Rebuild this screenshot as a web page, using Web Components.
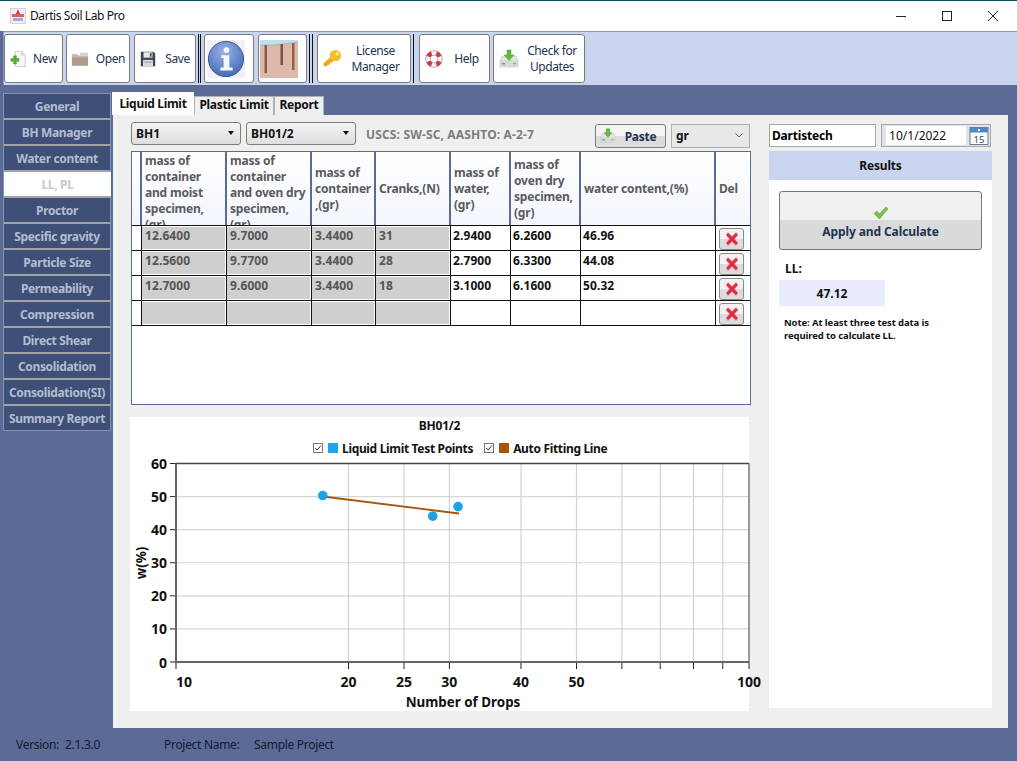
<!DOCTYPE html>
<html>
<head>
<meta charset="utf-8">
<title>Dartis Soil Lab Pro</title>
<style>
html, body { margin: 0; padding: 0; background: #5c6a96; }
body { font-family: "Noto Sans", "Liberation Sans", sans-serif; font-size: 12px; }
</style>
</head>
<body>
<soil-app></soil-app>
<script>
const ICONS = {
    logo: `<svg viewBox="0 0 16 16"><rect x=".5" y=".5" width="15" height="15" fill="#f4eef4" stroke="#d8d0e0"/><path d="M6 6 L8 1.500 L10 6 Z" fill="#d8262c"/><rect x="2" y="6" width="12" height="3" fill="#e05a5f"/><rect x="3" y="10" width="10" height="3" fill="#a8a8e0"/></svg>`,
    new: `<svg viewBox="0 0 20 20"><path d="M6 1.500h7l4 4v13H6z" fill="#f7f7f7" stroke="#c8c8c8"/><path d="M13 1.500v4h4" fill="#e2e2e2" stroke="#c8c8c8"/><path d="M4 6.500h3v3h3v3H7v3H4v-3H1v-3h3z" fill="#5cae3a" stroke="#3f8a26" stroke-width=".5"/></svg>`,
    open: `<svg viewBox="0 0 20 20"><path d="M1 4.500h6l1.500 1.500H15l.5 1.500H1z" fill="#cbbcab"/><path d="M10 3h9v4.500h-9z" fill="#dcd2c6"/><path d="M1 7h18v10.500H1z" fill="#ab9b8a"/><path d="M1 7h18v1.500H1z" fill="#c4b6a6"/></svg>`,
    save: `<svg viewBox="0 0 20 20"><path d="M2 2h14l2 2v14H2z" fill="#3f4652"/><rect x="5" y="2.500" width="10" height="6" fill="#e8eaee"/><rect x="12" y="3.500" width="2" height="4" fill="#48505c"/><rect x="4.500" y="11" width="11" height="7" fill="#d6dae0"/><rect x="6" y="13" width="8" height="1" fill="#8a909a"/></svg>`,
    info: `<svg viewBox="0 0 40 40"><rect width="40" height="40" fill="#f1f1f1"/><defs><radialGradient id="ig" cx="45%" cy="30%" r="75%"><stop offset="0" stop-color="#9cb4e6"/><stop offset="1" stop-color="#3f66b8"/></radialGradient></defs><circle cx="20" cy="20" r="18.500" fill="url(#ig)" stroke="#31518f"/><circle cx="20.500" cy="10.500" r="3" fill="#f4f6fa"/><path d="M15 16h8.500v13H27v3H14v-3h3.500V19H15z" fill="#f4f6fa"/></svg>`,
    map: `<svg viewBox="0 0 38 38" preserveAspectRatio="none"><rect width="38" height="38" fill="#dcb9a8"/><path d="M0 0h38v2L28 3.500 13 5 0 5z" fill="#bfe0ea"/><path d="M0 5L13 5 28 3.500 38 2" fill="none" stroke="#8aa6ae" stroke-width=".6"/><rect x="4.500" y="5" width="2.500" height="28" fill="#8a5a48"/><rect x="20.500" y="4" width="2.500" height="21" fill="#7a5040"/><rect x="32" y="3" width="2.500" height="27" fill="#94604c"/></svg>`,
    key: `<svg viewBox="0 0 20 20"><path d="M9 7.500 L.5 15 L1 18 L3.500 18.500 L5 16.500 L7 16.500 L7.500 14.500 L9.500 14 L12.500 11 Z" fill="#eaaa1c"/><circle cx="13" cy="7" r="6" fill="#f4be2a"/><circle cx="15" cy="5" r="1.600" fill="#fff2c4"/></svg>`,
    help: `<svg viewBox="0 0 20 20"><circle cx="10" cy="10" r="6.800" fill="none" stroke="#f6f6f6" stroke-width="4.800"/><circle cx="10" cy="10" r="9.300" fill="none" stroke="#8a8a8a" stroke-width=".7"/><circle cx="10" cy="10" r="4.300" fill="none" stroke="#8a8a8a" stroke-width=".7"/><g fill="none" stroke="#d63a3e" stroke-width="4.800"><path d="M3.700 7.400a6.800 6.800 0 0 1 3.700-3.700"/><path d="M12.600 3.700a6.800 6.800 0 0 1 3.700 3.700"/><path d="M16.300 12.600a6.800 6.800 0 0 1-3.700 3.700"/><path d="M7.400 16.300a6.800 6.800 0 0 1-3.700-3.700"/></g></svg>`,
    update: `<svg viewBox="0 0 20 20"><path d="M3 7h14l2 4v7H1v-7z" fill="#e4e6e2" stroke="#c0c4be" stroke-width=".6"/><rect x="1" y="11" width="18" height="7" fill="#d6d9d4"/><rect x="3" y="14" width="3" height="1.500" fill="#8a8f88"/><rect x="14" y="14" width="3" height="1.200" fill="#7cc050"/><path d="M8 1h4v5h3l-5 5.500L5 6h3z" fill="#62b83a" stroke="#4a9a28" stroke-width=".5"/></svg>`,
    del: `<svg viewBox="0 0 16 16"><path d="M2 4L4 1.500 8 5.500l4-4L14 4 10.500 8 14 12l-2 2.500-4-4-4 4L2 12 5.500 8z" fill="#dc2c44" stroke="#ee8c9a" stroke-width=".7"/></svg>`,
    calendar: `<svg viewBox="0 0 20 20"><rect x="1" y="1.500" width="18" height="17" fill="#fafafa" stroke="#6c7a8a"/><rect x="1" y="1.500" width="18" height="5" fill="#4f89c8"/><rect x="9" y="3" width="2" height="2" fill="#fff"/><text x="10" y="16.500" font-family="Noto Sans, sans-serif" font-size="9.500" text-anchor="middle" fill="#404854">15</text></svg>`,
    check: `<svg viewBox="0 0 16 14"><path d="M1 7.500L4 5.200 6.500 8 13 1l2 1.800L6.500 13z" fill="#7cc244" stroke="#5ea030" stroke-width=".6"/></svg>`
};

// small svg icon picked by name
class AppIcon extends HTMLElement {
    connectedCallback() {
        const size = this.getAttribute('size') || 20;
        const height = this.getAttribute('height') || size;
        this.attachShadow({ mode: 'open' }).innerHTML = `
        <style>
        :host { display: inline-flex; width: ${size}px; height: ${height}px; flex: none; }
        svg { width: 100%; height: 100%; display: block; }
        </style>
        ${ICONS[this.getAttribute('name')]}`;
    }
}

class TitleBar extends HTMLElement {
    constructor() {
        super();
        this.attachShadow({ mode: 'open' }).innerHTML = `
        <style>
        :host { display: flex; height: 30px; align-items: center; background: #fff; border-top: 1px solid #134a68; padding: 0 1px 0 10px; color: #111; font-size: 12px; }
        .name { margin-left: 4px; letter-spacing: -.42px; flex: 1; padding-bottom: 1px; }
        .win { width: 46px; height: 30px; display: flex; align-items: center; justify-content: center; }
        svg { width: 10px; height: 10px; stroke: #222; fill: none; }
        </style>
        <app-icon name="logo" size="16"></app-icon>
        <span class="name">Dartis Soil Lab Pro</span>
        <div class="win"><svg viewBox="0 0 10 10"><path d="M0 5.500h10"/></svg></div>
        <div class="win"><svg viewBox="0 0 10 10"><rect x=".5" y=".5" width="9" height="9"/></svg></div>
        <div class="win"><svg viewBox="0 0 10 10"><path d="M0 0l10 10M10 0L0 10"/></svg></div>`;
    }
}

class ToolBar extends HTMLElement {
    constructor() {
        super();
        this.attachShadow({ mode: 'open' }).innerHTML = `
        <style>
        :host { display: flex; height: 49px; padding: 2px 0; margin-left: 3px; background: #c9d4ee; border-top: 1px solid #8a98bc; border-left: 1px solid #8a98bc; align-items: stretch; }
        </style>
        <slot></slot>`;
    }
}

class ToolButton extends HTMLElement {
    constructor() {
        super();
        this.attachShadow({ mode: 'open' }).innerHTML = `
        <style>
        :host { display: flex; box-sizing: border-box; align-items: center; justify-content: center; gap: 7px; background: #fff; border: 1px solid #7b7b7b; border-radius: 3px; font-size: 12px; line-height: 16px; color: #243252; text-align: center; letter-spacing: -.42px; }
        </style>
        <slot name="icon"></slot><span><slot></slot></span>`;
    }
}

class ToolSep extends HTMLElement {
    constructor() {
        super();
        this.attachShadow({ mode: 'open' }).innerHTML = `
        <style>
        :host { display: block; flex: none; box-sizing: border-box; height: 49px; border-left: 1px solid #111; }
        :host([double]) { border-right: 1px solid #111; }
        </style>`;
    }
}

class SideNav extends HTMLElement {
    constructor() {
        super();
        this.attachShadow({ mode: 'open' }).innerHTML = `
        <style>
        :host { display: block; box-sizing: border-box; flex: none; width: 108px; height: 338px; margin: 8px 2px 0 3px; border: 1px solid #8492b6; background: #5c6a96; }
        </style>
        <slot></slot>`;
    }
}

class NavItem extends HTMLElement {
    constructor() {
        super();
        this.attachShadow({ mode: 'open' }).innerHTML = `
        <style>
        :host { display: flex; box-sizing: border-box; height: 26px; align-items: center; justify-content: center; background: #3e5078; border-bottom: 2px solid #a3a3a3; color: #b4bdd0; font-weight: 700; font-size: 12px; letter-spacing: -.35px; white-space: nowrap; }
        :host([active]) { background: #fff; color: #c9c9d2; margin-right: -1px; }
        :host(:last-child) { border-bottom: 0; height: 24px; }
        </style>
        <slot></slot>`;
    }
}

class TabStrip extends HTMLElement {
    constructor() {
        super();
        this.attachShadow({ mode: 'open' }).innerHTML = `
        <style>
        :host { display: flex; height: 23px; margin: 7px 0 0 -1px; align-items: flex-end; }
        </style>
        <slot></slot>`;
    }
}

class TabItem extends HTMLElement {
    constructor() {
        super();
        this.attachShadow({ mode: 'open' }).innerHTML = `
        <style>
        :host { display: flex; box-sizing: border-box; height: 19px; padding-bottom: 3px; align-items: center; justify-content: center; background: #efefef; border: 1px solid #aeb2bc; border-bottom: 0; font-weight: 700; font-size: 12px; letter-spacing: -.3px; color: #111; }
        :host([active]) { height: 23px; background: #fff; border: 0; padding-bottom: 1px; }
        </style>
        <slot></slot>`;
    }
}

class ComboBox extends HTMLElement {
    constructor() {
        super();
        this.attachShadow({ mode: 'open' }).innerHTML = `
        <style>
        :host { display: flex; box-sizing: border-box; width: 110px; height: 23px; padding: 0 6px 1px 4px; align-items: center; justify-content: space-between; border: 1px solid #7d7d7d; border-radius: 3px; background: linear-gradient(#f4f4f4, #dedede); font-weight: 700; font-size: 12px; color: #111; }
        i { width: 0; height: 0; border: 3.500px solid transparent; border-top: 4px solid #111; border-bottom: 0; }
        :host([flat]) { border: 1px solid #b0b0b0; border-radius: 0; background: #e8e8e8; width: 79px; height: 24px; margin-top: 2px; }
        :host([flat]) i { display: none; }
        svg { display: none; width: 8px; height: 5px; fill: none; stroke: #666; }
        :host([flat]) svg { display: block; }
        </style>
        <span><slot></slot></span><i></i><svg viewBox="0 0 8 5"><path d="M.5.500L4 4 7.500.500"/></svg>`;
    }
}

class PasteButton extends HTMLElement {
    constructor() {
        super();
        this.attachShadow({ mode: 'open' }).innerHTML = `
        <style>
        :host { display: flex; box-sizing: border-box; width: 71px; height: 24px; margin-top: 2px; padding-right: 5px; align-items: center; justify-content: center; gap: 9px; border: 1px solid #7d7d7d; border-radius: 3px; background: linear-gradient(#f4f4f4 50%, #dcdcdc 50%); font-weight: 700; font-size: 12px; color: #243252; letter-spacing: -.3px; }
        </style>
        <app-icon name="update" size="16"></app-icon><span><slot></slot></span>`;
    }
}

class DeleteButton extends HTMLElement {
    constructor() {
        super();
        this.attachShadow({ mode: 'open' }).innerHTML = `
        <style>
        :host { display: flex; box-sizing: border-box; width: 25px; height: 22px; align-items: center; justify-content: center; border: 1px solid #8a8a8a; border-radius: 3px; background: linear-gradient(#f2f2f2 50%, #dcdcdc 50%); }
        </style>
        <app-icon name="del" size="16"></app-icon>`;
    }
}

// test data grid, rows are filled from the data below
class DataGrid extends HTMLElement {
    constructor() {
        super();
        const heads = [
            'mass of container and moist specimen, (gr)',
            'mass of container and oven dry specimen, (gr)',
            'mass of container ,(gr)',
            'Cranks,(N)',
            'mass of water, (gr)',
            'mass of oven dry specimen, (gr)',
            'water content,(%)',
            'Del'
        ];
        const rows = [
            ['12.6400', '9.7000', '3.4400', '31', '2.9400', '6.2600', '46.96'],
            ['12.5600', '9.7700', '3.4400', '28', '2.7900', '6.3300', '44.08'],
            ['12.7000', '9.6000', '3.4400', '18', '3.1000', '6.1600', '50.32'],
            ['', '', '', '', '', '', '']
        ];
        let cells = '<div class="head"></div>';
        heads.forEach(h => { cells += `<div class="head"><span>${h}</span></div>`; });
        rows.forEach(r => {
            cells += '<div class="cell"></div>';
            r.forEach((v, i) => { cells += `<div class="cell ${i < 4 ? 'locked' : ''}"><b>${v}</b></div>`; });
            cells += '<div class="cell del"><delete-button></delete-button></div>';
        });
        this.attachShadow({ mode: 'open' }).innerHTML = `
        <style>
        :host { display: block; box-sizing: border-box; width: 620px; height: 254px; border: 1px solid #5c6a96; background: #fff; font-weight: 700; font-size: 12px; }
        .grid { display: grid; grid-template-columns: 10px 85px 85px 64px 75px 60px 70px 135px 34px; grid-template-rows: 73px 25px 25px 25px 25px; }
        .head { box-sizing: border-box; overflow: hidden; display: flex; align-items: center; padding: 0 2px 0 3px; line-height: 16px; border-right: 2px solid #5c6a96; color: #5a5a60; background: linear-gradient(#fff, #f3f6fd); letter-spacing: -.2px; }
        .head:nth-child(9) { border-right: 0; }
        .head:nth-child(2), .head:nth-child(3) { align-items: flex-start; padding-top: 1px; }
        .cell { box-sizing: border-box; border-right: 1px solid #111; border-top: 1px solid #111; padding: 0 1px 0 2px; line-height: 20px; color: #111; }
        .cell b { font-weight: 700; letter-spacing: .1px; }
        .grid > .cell:nth-last-child(-n+9) { border-bottom: 1px solid #111; height: 26px; }
        .locked { color: #555; background: #cfcfcf; background-clip: content-box; padding: 1px 1px 1px 0; }
        .locked b { padding-left: 3px; display: block; line-height: 18px; }
        .del { border-right: 0; padding: 2px 0 0 3px; }
        </style>
        <div class="grid">${cells}</div>`;
    }
}

// log x axis chart, the points are the water contents from the grid
class FlowChart extends HTMLElement {
    constructor() {
        super();
        const left = 46, right = 619, top = 46.5, bottom = 245;
        const xAt = n => left + (right - left) * Math.log10(n / 10);
        const yAt = w => bottom - (bottom - top) * w / 60;
        let s = '';
        [10, 20, 30, 40, 50].forEach(w => { s += `<path d="M${left} ${yAt(w)}H${right}" stroke="#d6d6d6" stroke-width="1.200"/>`; });
        [20, 25, 30, 40, 50, 60, 70, 80, 90].forEach(n => { s += `<path d="M${xAt(n)} ${top}V${bottom}" stroke="#d2d2d2" stroke-width="1.200"/>`; });
        [0, 10, 20, 30, 40, 50, 60].forEach(w => {
            s += `<path d="M${left - 6} ${yAt(w)}H${left}" stroke="#222"/>`;
            s += `<text x="${left - 9}" y="${yAt(w) + 5.500}" text-anchor="end" class="t">${w}</text>`;
        });
        [10, 20, 25, 30, 40, 50, 60, 70, 80, 90, 100].forEach(n => {
            s += `<path d="M${xAt(n)} ${bottom}v7" stroke="#222"/>`;
        });
        [10, 20, 25, 30, 40, 50, 100].forEach(n => {
            const x = n === 10 ? xAt(n) + 8 : xAt(n);
            s += `<text x="${x}" y="270" text-anchor="middle" class="t">${n}</text>`;
        });
        s += `<path d="M${left} ${top}H${right}" stroke="#444" stroke-width="1.300"/>`;
        s += `<path d="M${right} ${top}V${bottom}" stroke="#666" stroke-width="1.300"/>`;
        s += `<path d="M${left} ${top}V${bottom}H${right}" fill="none" stroke="#666" stroke-width="2"/>`;
        s += `<path d="M193 79.500L329 96.500" stroke="#a9560a" stroke-width="1.800"/>`;
        [[18, 50.32], [28, 44.08], [31, 46.96]].forEach(p => {
            s += `<circle cx="${xAt(p[0]) + 0.5}" cy="${yAt(p[1])}" r="4.800" fill="#1fa2e6"/>`;
        });
        this.attachShadow({ mode: 'open' }).innerHTML = `
        <style>
        :host { display: block; width: 619px; height: 294px; margin: 12px 0 0 -1px; background: #fff; }
        .title { text-align: center; font-weight: 700; font-size: 12px; color: #111; padding-top: 1px; height: 17px; line-height: 16px; letter-spacing: -.2px; }
        .legend { display: flex; align-items: center; height: 22px; padding: 2px 0 1px 183px; font-weight: 700; font-size: 12px; color: #111; letter-spacing: -.33px; }
        .box { box-sizing: border-box; width: 10px; height: 10px; border: 1px solid #777; margin-right: 5px; flex: none; display: flex; }
        .box svg { width: 100%; height: 100%; }
        .swatch { width: 10px; height: 10px; margin-right: 4px; flex: none; }
        .legend span { margin-right: 11px; white-space: nowrap; }
        svg.plot { display: block; margin-top: -43px; overflow: visible; }
        svg.plot text { font-family: "Noto Sans", "Liberation Sans", sans-serif; font-weight: 700; fill: #111; }
        .t { font-size: 14px; }
        .axis { font-size: 13.400px; }
        </style>
        <div class="title">BH01/2</div>
        <div class="legend">
            <div class="box"><svg viewBox="0 0 10 10"><path d="M1.500 5L4 7.500 8.500 2" fill="none" stroke="#222" stroke-width="1.200"/></svg></div>
            <div class="swatch" style="background:#1fa2e6"></div><span>Liquid Limit Test Points</span>
            <div class="box"><svg viewBox="0 0 10 10"><path d="M1.500 5L4 7.500 8.500 2" fill="none" stroke="#222" stroke-width="1.200"/></svg></div>
            <div class="swatch" style="background:#a9560a"></div><span>Auto Fitting Line</span>
        </div>
        <svg class="plot" width="619" height="294" viewBox="0 0 619 294">
            ${s}
            <text x="333" y="290" text-anchor="middle" class="axis">Number of Drops</text>
            <text transform="translate(16 146) rotate(-90)" text-anchor="middle" class="axis">w(%)</text>
        </svg>`;
    }
}

class ResultsPanel extends HTMLElement {
    constructor() {
        super();
        this.attachShadow({ mode: 'open' }).innerHTML = `
        <style>
        :host { display: block; flex: 1; background: #fff; font-weight: 700; color: #111; font-size: 12px; }
        .head { height: 29px; background: #c9d4ee; display: flex; align-items: center; justify-content: center; letter-spacing: -.2px; }
        .apply { box-sizing: border-box; width: 203px; height: 59px; margin: 11px 0 0 10px; border: 1px solid #777; border-radius: 3px; background: linear-gradient(#f0f0f0 50%, #d9dadb 50%); display: flex; flex-direction: column; align-items: center; padding-top: 14px; color: #243252; font-size: 12px; letter-spacing: -.1px; line-height: 17px; }
        .apply span { margin-top: 3px; }
        .ll { margin: 12px 0 0 16px; line-height: 14px; }
        .value { width: 106px; height: 26px; margin: 4px 0 0 10px; background: #e8ecfa; display: flex; align-items: center; justify-content: center; }
        .note { margin: 10px 0 0 15px; width: 170px; font-size: 9.500px; line-height: 13px; letter-spacing: -.1px; }
        </style>
        <div class="head">Results</div>
        <div class="apply"><app-icon name="check" size="16" height="14"></app-icon><span>Apply and Calculate</span></div>
        <div class="ll">LL:</div>
        <div class="value">47.12</div>
        <div class="note">Note: At least three test data is required to calculate LL.</div>`;
    }
}

class StatusBar extends HTMLElement {
    constructor() {
        super();
        this.attachShadow({ mode: 'open' }).innerHTML = `
        <style>
        :host { display: flex; flex: 1; align-items: center; font-size: 12px; color: #161c30; letter-spacing: -.3px; padding-bottom: 1px; }
        span { white-space: nowrap; }
        </style>
        <span style="width:49px;margin-left:16px">Version:</span>
        <span style="width:99px">2.1.3.0</span>
        <span style="width:90px">Project Name:</span>
        <span>Sample Project</span>`;
    }
}

class SoilApp extends HTMLElement {
    constructor() {
        super();
        const btn = (style, icon, text, size) => `<tool-button style="${style}"><app-icon slot="icon" name="${icon}" size="${size || 18}"></app-icon>${text}</tool-button>`;
        const navs = ['General', 'BH Manager', 'Water content', 'LL, PL', 'Proctor', 'Specific gravity', 'Particle Size', 'Permeability', 'Compression', 'Direct Shear', 'Consolidation', 'Consolidation(SI)', 'Summary Report'];
        this.attachShadow({ mode: 'open' }).innerHTML = `
        <style>
        :host { display: flex; flex-direction: column; width: 1017px; height: 761px; overflow: hidden; background: #5c6a96; }
        .middle { display: flex; height: 643px; }
        .main { width: 895px; }
        .panel { height: 613px; background: #efefef; box-sizing: border-box; padding: 7px 16px 20px 18px; display: flex; gap: 18px; }
        .left { width: 620px; }
        .picks { display: flex; height: 29px; align-items: flex-start; }
        .picks b { color: #7c7c7c; margin: 4px 0 0 10px; width: 229px; letter-spacing: .15px; font-size: 12px; white-space: nowrap; }
        .right { width: 223px; display: flex; flex-direction: column; }
        .dates { display: flex; height: 29px; gap: 5px; align-items: flex-start; padding-top: 2px; box-sizing: border-box; }
        .who, .when { box-sizing: border-box; height: 23px; border: 1px solid #a8a8a8; background: #fff; display: flex; align-items: center; }
        .who { width: 107px; padding: 0 2px 1px; font-weight: 700; letter-spacing: -.2px; }
        .when { width: 110px; padding: 0 1px 0 4px; justify-content: space-between; background: #dfe3ec; color: #111; }
        .when span { background: #fff; flex: 1; margin-right: 3px; line-height: 19px; }
        </style>
        <title-bar></title-bar>
        <tool-bar>
            ${btn('width:59px;gap:5px', 'new', 'New')}
            <div style="width:3px"></div>${btn('width:64px;gap:7px', 'open', 'Open')}
            <div style="width:4px"></div>${btn('width:62px;gap:8px;padding-right:1px', 'save', 'Save')}
            <div style="width:2px"></div><tool-sep double style="width:3px"></tool-sep>
            <div style="width:3px"></div><tool-button style="width:50px"><app-icon slot="icon" name="info" size="38"></app-icon></tool-button>
            <div style="width:4px"></div><tool-button style="width:49px"><app-icon slot="icon" name="map" size="38"></app-icon></tool-button>
            <div style="width:2px"></div><tool-sep double style="width:4px"></tool-sep>
            <div style="width:4px"></div><tool-button style="width:94px;gap:10px;padding-right:6px"><app-icon slot="icon" name="key" size="19"></app-icon>License<br>Manager</tool-button>
            <div style="width:2px"></div><tool-sep style="width:1px"></tool-sep>
            <div style="width:5px"></div>${btn('width:71px;gap:11px;padding-right:5px', 'help', 'Help')}
            <div style="width:3px"></div><tool-button style="width:92px;gap:8px;padding-right:2px"><app-icon slot="icon" name="update" size="20"></app-icon>Check for<br>Updates</tool-button>
        </tool-bar>
        <div class="middle">
            <side-nav>${navs.map(n => `<nav-item ${n === 'LL, PL' ? 'active' : ''}>${n}</nav-item>`).join('')}</side-nav>
            <div class="main">
                <tab-strip>
                    <tab-item active style="width:82px">Liquid Limit</tab-item>
                    <tab-item style="width:80px">Plastic Limit</tab-item>
                    <tab-item style="width:50px">Report</tab-item>
                </tab-strip>
                <div class="panel">
                    <div class="left">
                        <div class="picks">
                            <combo-box>BH1</combo-box>
                            <combo-box style="margin-left:5px">BH01/2</combo-box>
                            <b>USCS: SW-SC, AASHTO: A-2-7</b>
                            <paste-button>Paste</paste-button>
                            <combo-box flat style="margin-left:5px">gr</combo-box>
                        </div>
                        <data-grid></data-grid>
                        <flow-chart></flow-chart>
                    </div>
                    <div class="right">
                        <div class="dates">
                            <div class="who">Dartistech</div>
                            <div class="when"><span>&nbsp;10/1/2022</span><app-icon name="calendar" size="20"></app-icon></div>
                        </div>
                        <results-panel></results-panel>
                    </div>
                </div>
            </div>
        </div>
        <status-bar></status-bar>`;
    }
}

customElements.define('app-icon', AppIcon);
customElements.define('title-bar', TitleBar);
customElements.define('tool-bar', ToolBar);
customElements.define('tool-button', ToolButton);
customElements.define('tool-sep', ToolSep);
customElements.define('side-nav', SideNav);
customElements.define('nav-item', NavItem);
customElements.define('tab-strip', TabStrip);
customElements.define('tab-item', TabItem);
customElements.define('combo-box', ComboBox);
customElements.define('paste-button', PasteButton);
customElements.define('delete-button', DeleteButton);
customElements.define('data-grid', DataGrid);
customElements.define('flow-chart', FlowChart);
customElements.define('results-panel', ResultsPanel);
customElements.define('status-bar', StatusBar);
customElements.define('soil-app', SoilApp);
</script>
</body>
</html>
